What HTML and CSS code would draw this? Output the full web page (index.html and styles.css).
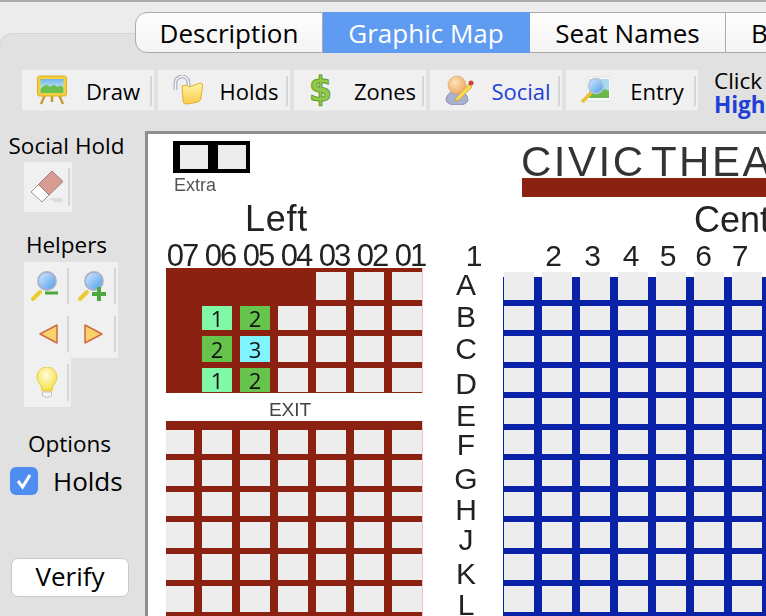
FILE: index.html
```html
<!DOCTYPE html>
<html lang="en">
<head>
    <meta charset="UTF-8">
    <meta name="viewport" content="width=device-width, initial-scale=1.0">
    <title>Graphic Map</title>
    <link rel="stylesheet" href="styles.css">
</head>
<body>
    <!-- Tab strip sits half over the panel -->
    <div class="tabs">
        <div class="tab tab-first">Description</div>
        <div class="tab tab-active">Graphic Map</div>
        <div class="tab tab-seats">Seat Names</div>
        <div class="tab tab-last">B</div>
    </div>

    <div class="panel">
        <div class="toolbar">
            <div class="tool">
                <svg class="tool-icon" viewBox="0 0 30 30">
                    <defs>
                        <linearGradient id="sky" x1="0" y1="0" x2="0" y2="1"><stop offset="0" stop-color="#6fb6ee"/><stop offset="1" stop-color="#f2f8ee"/></linearGradient>
                        <linearGradient id="lens" x1="0" y1="0" x2="1" y2="1"><stop offset="0" stop-color="#d8ecff"/><stop offset="1" stop-color="#4a9bea"/></linearGradient>
                        <linearGradient id="folder" x1="0" y1="0" x2="0" y2="1"><stop offset="0" stop-color="#fff5a8"/><stop offset="1" stop-color="#f8cb48"/></linearGradient>
                        <radialGradient id="head" cx="0.4" cy="0.35" r="0.7"><stop offset="0" stop-color="#fde2b8"/><stop offset="1" stop-color="#eda860"/></radialGradient>
                        <radialGradient id="bulb" cx="0.45" cy="0.35" r="0.7"><stop offset="0" stop-color="#fffde0"/><stop offset="1" stop-color="#f6dc30"/></radialGradient>
                    </defs>
                    <path d="M8 20 L4 29 M22 20 L26 29 M15 20 V27" stroke="#c8982c" stroke-width="2.4" fill="none"/>
                    <rect x="0.5" y="1" width="29" height="20" rx="2" fill="#f5cf3e" stroke="#dcae28"/>
                    <rect x="3.5" y="4" width="23" height="14" fill="url(#sky)"/>
                    <path d="M3.5 18 V14 Q9 7 13 12 Q18 8 20 12 Q24 9 26.500 13 V18 Z" fill="#6cc04e"/>
                </svg>
                <span class="tool-label">Draw</span>
            </div>
            <div class="tool">
                <svg class="tool-icon" viewBox="0 0 30 30">
                    <path d="M2.500 15 V9 A6.500 6.500 0 0 1 15.500 7 V11" stroke="#a8acc0" stroke-width="3.800" fill="none"/>
                    <path d="M2.500 15 V9 A6.500 6.500 0 0 1 15.500 7 V11" stroke="#f4f4f8" stroke-width="1.600" fill="none"/>
                    <path d="M9 11 L14 10 L16 12 L27 8 Q30 8 29.500 11 L28 23 Q27.500 26 25 27 L14 29 Q10 29.500 10 26 Z" fill="url(#folder)" stroke="#e0b038"/>
                </svg>
                <span class="tool-label">Holds</span>
            </div>
            <div class="tool">
                <span class="tool-icon dollar">$</span>
                <span class="tool-label">Zones</span>
            </div>
            <div class="tool">
                <svg class="tool-icon" viewBox="0 0 30 30">
                    <path d="M1 25 Q2 16 12 16 Q22 16 23 25 Q22 30 12 30 Q2 30 1 25 Z" fill="#aab0d2" stroke="#8c90b4"/>
                    <circle cx="12" cy="10" r="9" fill="url(#head)" stroke="#d8a060" stroke-width="0.6"/>
                    <path d="M11 23 L24 9 L27 12 L14 25 L10 26 Z" fill="#f6dc50" stroke="#c8a030" stroke-width="0.8"/>
                    <circle cx="26" cy="8" r="2.500" fill="#c8443c"/>
                </svg>
                <span class="tool-label tool-label-blue">Social</span>
            </div>
            <div class="tool">
                <svg class="tool-icon" viewBox="0 0 30 30">
                    <rect x="6" y="2" width="24" height="24" fill="#fafafa" stroke="#d8d8d8" stroke-width="0.6"/>
                    <rect x="8" y="4" width="20" height="19" fill="#a8d8f2"/>
                    <path d="M8 23 V17 Q16 12 20 15 Q24 13 28 16 V23 Z" fill="#6cb84c"/>
                    <path d="M10 18 L2 26" stroke="#e8c030" stroke-width="3.400" stroke-linecap="round"/>
                    <circle cx="15" cy="11" r="7.500" fill="url(#lens)" stroke="#b8c4d8" stroke-width="1.500"/>
                </svg>
                <span class="tool-label">Entry</span>
            </div>
            <div class="hint">Click<br><b class="hint-blue">High</b></div>
        </div>

        <div class="workarea">
            <div class="sidebar">
                <div class="side-title">Social Hold</div>
                <div class="side-btn side-btn-single">
                    <svg class="icon-eraser" viewBox="0 0 34 34">
                        <path d="M1 22 L8.500 14.500 L19 25 L12 32 Z" fill="#fbfbfb" stroke="#9a9a9a"/>
                        <path d="M8.500 14.500 L22 1 L33 11.500 L19 25 Z" fill="#d89c94" stroke="#a07c78"/>
                        <path d="M20 29 H32 M23 31 H33" stroke="#c8c8c8"/>
                    </svg>
                </div>

                <div class="side-title side-title-helpers">Helpers</div>
                <div class="helper-grid">
                    <div class="side-btn">
                        <svg class="icon-small" viewBox="0 0 30 32">
                            <use href="#glass"/>
                            <path d="M15 23 H28" stroke="#4fa83c" stroke-width="3"/>
                        </svg>
                    </div>
                    <div class="side-btn">
                        <svg class="icon-small" viewBox="0 0 30 32">
                            <g id="glass">
                                <path d="M10 22 L3 29" stroke="#eccb30" stroke-width="4" stroke-linecap="round"/>
                                <circle cx="17" cy="11" r="9" fill="url(#lens)" stroke="#aab0cc" stroke-width="1.800"/>
                            </g>
                            <path d="M15 24 H29 M22 17 V31" stroke="#4fa83c" stroke-width="4"/>
                        </svg>
                    </div>
                    <div class="side-btn">
                        <svg class="icon-small" viewBox="0 0 30 32">
                            <path d="M10 16 L27 7 V25 Z" fill="#f8d468" stroke="#cf6a48" stroke-width="1.500" stroke-linejoin="round"/>
                        </svg>
                    </div>
                    <div class="side-btn">
                        <svg class="icon-small" viewBox="0 0 30 32">
                            <path d="M25 16 L8 7 V25 Z" fill="#f8d468" stroke="#cf6a48" stroke-width="1.500" stroke-linejoin="round"/>
                        </svg>
                    </div>
                    <div class="side-btn">
                        <svg class="icon-small" viewBox="0 0 30 32">
                            <path d="M12 24 Q12 19 9 16 A10 10 0 1 1 25 16 Q22 19 22 24 Z" fill="url(#bulb)" stroke="#e4c428" stroke-width="0.800"/>
                            <path d="M12.500 25 H21.500 V29 Q17 32 12.500 29 Z" fill="#f4f4f4" stroke="#c4c4c4"/>
                        </svg>
                    </div>
                </div>

                <div class="side-title side-title-options">Options</div>
                <label class="check-row">
                    <span class="check-box">
                        <svg viewBox="0 0 28 28" class="check-mark"><path d="M8 14 L12.500 20 L20 8" stroke="#fff" stroke-width="3" fill="none"/></svg>
                    </span>
                    Holds
                </label>
                <div class="verify">Verify</div>
            </div>

            <!-- Seat map: a free canvas, blocks are placed where the venue has them -->
            <div class="map">
                <div class="extra">
                    <div class="extra-seat"></div>
                    <div class="extra-seat"></div>
                </div>
                <div class="extra-label">Extra</div>

                <div class="venue">CIVIC THEA</div>
                <div class="stage"></div>

                <div class="section-name section-left">Left</div>
                <div class="section-name section-center">Cent</div>

                <div class="left-head">
                    <span>07</span><span>06</span><span>05</span><span>04</span><span>03</span><span>02</span><span>01</span>
                </div>

                <div class="block block-left-top">
                    <div class="seat held"></div><div class="seat held"></div><div class="seat held"></div><div class="seat held"></div><div class="seat"></div><div class="seat"></div><div class="seat"></div>
                    <div class="seat held"></div><div class="seat mint">1</div><div class="seat green">2</div><div class="seat"></div><div class="seat"></div><div class="seat"></div><div class="seat"></div>
                    <div class="seat held"></div><div class="seat green">2</div><div class="seat cyan">3</div><div class="seat"></div><div class="seat"></div><div class="seat"></div><div class="seat"></div>
                    <div class="seat held"></div><div class="seat mint">1</div><div class="seat green">2</div><div class="seat"></div><div class="seat"></div><div class="seat"></div><div class="seat"></div>
                </div>

                <div class="exit">EXIT</div>

                <div class="block block-left-bottom">
                    <div class="seat"></div><div class="seat"></div><div class="seat"></div><div class="seat"></div><div class="seat"></div><div class="seat"></div><div class="seat"></div>
                    <div class="seat"></div><div class="seat"></div><div class="seat"></div><div class="seat"></div><div class="seat"></div><div class="seat"></div><div class="seat"></div>
                    <div class="seat"></div><div class="seat"></div><div class="seat"></div><div class="seat"></div><div class="seat"></div><div class="seat"></div><div class="seat"></div>
                    <div class="seat"></div><div class="seat"></div><div class="seat"></div><div class="seat"></div><div class="seat"></div><div class="seat"></div><div class="seat"></div>
                    <div class="seat"></div><div class="seat"></div><div class="seat"></div><div class="seat"></div><div class="seat"></div><div class="seat"></div><div class="seat"></div>
                    <div class="seat"></div><div class="seat"></div><div class="seat"></div><div class="seat"></div><div class="seat"></div><div class="seat"></div><div class="seat"></div>
                </div>

                <div class="center-head">
                    <span>1</span><i></i><span>2</span><span>3</span><span>4</span><span>5</span><span>6</span><span>7</span>
                </div>

                <div class="rows">
                    <span>A</span><span>B</span><span>C</span><span>D</span><span>E</span><span>F</span><span>G</span><span>H</span><span>J</span><span>K</span><span>L</span>
                </div>

                <div class="block block-center">
                    <div class="seat"></div><div class="seat"></div><div class="seat"></div><div class="seat"></div><div class="seat"></div><div class="seat"></div><div class="seat"></div>
                    <div class="seat"></div><div class="seat"></div><div class="seat"></div><div class="seat"></div><div class="seat"></div><div class="seat"></div><div class="seat"></div>
                    <div class="seat"></div><div class="seat"></div><div class="seat"></div><div class="seat"></div><div class="seat"></div><div class="seat"></div><div class="seat"></div>
                    <div class="seat"></div><div class="seat"></div><div class="seat"></div><div class="seat"></div><div class="seat"></div><div class="seat"></div><div class="seat"></div>
                    <div class="seat"></div><div class="seat"></div><div class="seat"></div><div class="seat"></div><div class="seat"></div><div class="seat"></div><div class="seat"></div>
                    <div class="seat"></div><div class="seat"></div><div class="seat"></div><div class="seat"></div><div class="seat"></div><div class="seat"></div><div class="seat"></div>
                    <div class="seat"></div><div class="seat"></div><div class="seat"></div><div class="seat"></div><div class="seat"></div><div class="seat"></div><div class="seat"></div>
                    <div class="seat"></div><div class="seat"></div><div class="seat"></div><div class="seat"></div><div class="seat"></div><div class="seat"></div><div class="seat"></div>
                    <div class="seat"></div><div class="seat"></div><div class="seat"></div><div class="seat"></div><div class="seat"></div><div class="seat"></div><div class="seat"></div>
                    <div class="seat"></div><div class="seat"></div><div class="seat"></div><div class="seat"></div><div class="seat"></div><div class="seat"></div><div class="seat"></div>
                    <div class="seat"></div><div class="seat"></div><div class="seat"></div><div class="seat"></div><div class="seat"></div><div class="seat"></div><div class="seat"></div>
                </div>
            </div>
        </div>
    </div>
</body>
</html>
```

FILE: styles.css
```css
html, body {
    height: 100%;
}

body {
    margin: 0;
    background: #ececec;
    border-top: 2px solid #ababab;
    box-sizing: border-box;
    font-family: 'Open Sans', sans-serif;
    color: #000;
    overflow: hidden;
    display: flex;
    flex-direction: column;
}

/* Tabs */
.tabs {
    display: flex;
    flex-shrink: 0;
    height: 41px;
    margin: 10px 0 -20px 135px;
    position: relative;
    z-index: 1;
    font-size: 26px;
}

.tab {
    display: flex;
    flex-shrink: 0;
    align-items: center;
    justify-content: center;
    box-sizing: border-box;
    background: linear-gradient(#fdfdfd, #f4f4f4);
    border: 1px solid #ababab;
    border-left: none;
}

.tab-first {
    width: 188px;
    border-left: 1px solid #ababab;
    border-radius: 12px 0 0 12px;
}

.tab-active {
    width: 207px;
    background: #5f9bf0;
    border-color: #5f9bf0;
    color: #fff;
}

.tab-seats {
    width: 196px;
}

.tab-last {
    width: 60px;
    justify-content: flex-start;
    padding-left: 25px;
    border-right: none;
}

/* Main panel */
.panel {
    flex: 1;
    display: flex;
    flex-direction: column;
    min-height: 0;
    padding-top: 37px;
    background: #e1e1e1;
    border-top: 1px solid #d4d4d4;
    border-left: 1px solid #d4d4d4;
    margin-left: -1px;
    border-top-left-radius: 14px;
}

.toolbar {
    display: flex;
    flex-shrink: 0;
    gap: 4px;
    height: 40px;
    margin-top: -1px;
    padding-left: 22px;
    font-size: 22px;
    white-space: nowrap;
}

.tool {
    position: relative;
    display: flex;
    align-items: center;
    width: 132px;
    padding-left: 15px;
    box-sizing: border-box;
    background: #f0f0f0;
    box-shadow: 0 1px 0 #e8e8e8;
}

.tool::after {
    content: "";
    position: absolute;
    left: 128px;
    top: 6px;
    width: 2px;
    height: 30px;
    background: #d6d6d6;
}

.tool-icon {
    width: 30px;
    height: 30px;
    flex-shrink: 0;
}

.tool-label {
    width: 82px;
    margin: 2px 0 0 5px;
    text-align: center;
}

.tool-label-blue {
    color: #1f3fd6;
}

.dollar {
    font-family: 'DejaVu Sans', sans-serif;
    font-size: 33px;
    font-weight: bold;
    line-height: 30px;
    color: #93c94a;
    -webkit-text-stroke: 1px #5e9e2c;
}

.hint {
    margin-left: 12px;
    line-height: 24px;
    margin-top: -1px;
    font-size: 22.5px;
}

.hint-blue {
    color: #1f3fd6;
}

.workarea {
    flex: 1;
    display: flex;
    min-height: 0;
    margin-top: 21px;
}

/* Left column */
.sidebar {
    width: 145px;
    flex-shrink: 0;
    display: flex;
    flex-direction: column;
    font-size: 22.5px;
}

.side-title {
    width: 133px;
    height: 30px;
    line-height: 30px;
    text-align: center;
    white-space: nowrap;
}

.side-title-helpers {
    margin-top: 18px;
}

.side-title-options {
    margin-top: 22px;
    margin-left: 3px;
}

.side-btn {
    position: relative;
    display: flex;
    align-items: center;
    padding-left: 6px;
    box-sizing: border-box;
    background: #f0f0f0;
}

.side-btn::after {
    content: "";
    position: absolute;
    right: 2px;
    top: 6px;
    bottom: 6px;
    width: 2px;
    background: #d6d6d6;
}

.side-btn-single {
    width: 48px;
    height: 50px;
    margin: 1px 0 0 24px;
}

.icon-eraser {
    width: 34px;
    height: 34px;
}

.icon-small {
    width: 30px;
    height: 32px;
}

.helper-grid {
    display: grid;
    grid-template-columns: 47px 47px;
    grid-template-rows: 48px 48px 49px;
    width: 94px;
    margin: 2px 0 0 24px;
}

.check-row {
    display: flex;
    align-items: center;
    gap: 15px;
    height: 28px;
    margin: 8px 0 0 10px;
    font-size: 26px;
}

.check-box {
    display: block;
    width: 28px;
    height: 28px;
    border-radius: 6px;
    background: #4f8df1;
}

.check-mark {
    display: block;
}

.verify {
    width: 118px;
    height: 39px;
    line-height: 35px;
    margin: auto 0 19px 11px;
    box-sizing: border-box;
    text-align: center;
    font-size: 26px;
    background: #fff;
    border: 1px solid #c8c8c8;
    border-radius: 7px;
}

/* Seat map */
.map {
    flex: 1;
    position: relative;
    overflow: hidden;
    background: #fff;
    border-top: 3px solid #8f8f8f;
    border-left: 3px solid #8f8f8f;
    font-family: 'Liberation Sans', sans-serif;
    color: #222;
    filter: blur(0.3px);
}

.extra {
    position: absolute;
    left: 25px;
    top: 7px;
    display: flex;
    gap: 10px;
    width: 77px;
    height: 32px;
    box-sizing: border-box;
    padding: 4px 4px 4px 7px;
    background: #000;
}

.extra-seat {
    flex: 1;
    background: #ececec;
}

.extra-label {
    position: absolute;
    left: 26px;
    top: 41px;
    font-size: 18px;
    color: #555;
}

.venue {
    position: absolute;
    left: 373px;
    top: 4px;
    font-size: 42px;
    line-height: 48px;
    letter-spacing: 2.5px;
    word-spacing: -8px;
    white-space: nowrap;
    color: #333;
}

.stage {
    position: absolute;
    left: 374px;
    top: 44px;
    right: 0;
    height: 19px;
    background: #8b2211;
}

.section-name {
    position: absolute;
    font-size: 36px;
    line-height: 40px;
}

.section-left {
    left: 97px;
    top: 65px;
    letter-spacing: 0.7px;
}

.section-center {
    left: 546px;
    top: 66px;
}

.left-head {
    position: absolute;
    left: 15px;
    top: 107px;
    display: flex;
    font-size: 31px;
    line-height: 30px;
    letter-spacing: -2px;
}

.left-head span {
    width: 38px;
    text-align: center;
}

.center-head {
    position: absolute;
    left: 307px;
    top: 107px;
    display: grid;
    grid-template-columns: 38px 41px 39px 39px 38px 36px 35px 38px;
    font-size: 30px;
    line-height: 30px;
}

.center-head span {
    text-align: center;
}

.rows {
    position: absolute;
    left: 298px;
    top: 135px;
    width: 40px;
    display: grid;
    grid-template-rows: 32px 32px 32px 38px 26px 32px 36px 26px 34px 34px 28px;
    font-size: 30px;
    line-height: 24px;
    text-align: center;
}

.rows span {
    align-self: center;
}

.block {
    position: absolute;
    display: grid;
    gap: 6px 8px;
}

.block-left-top,
.block-left-bottom {
    left: 18px;
    width: 257px;
    box-sizing: border-box;
    grid-template-columns: 28px repeat(6, 30px);
    background: #8b2211;
    border-right: 1px solid #eec4c4;
}

.block-left-top {
    top: 134px;
    height: 125px;
    padding-top: 4px;
    grid-template-rows: 28px 24px 26px 24px;
}

.block-left-bottom {
    top: 287px;
    height: 195px;
    padding-top: 9px;
    grid-template-rows: 24px 26px 24px 26px 26px 26px;
}

.block-center {
    left: 355px;
    top: 138px;
    height: 344px;
    width: 263px;
    box-sizing: border-box;
    padding-left: 1px;
    grid-template-columns: repeat(7, 30px);
    grid-template-rows: 28px 24px 26px 24px 26px 24px 26px 24px 26px 26px 26px;
    background: linear-gradient(#fff 5px, #0a22a8 5px);
}

.seat {
    display: flex;
    align-items: center;
    justify-content: center;
    background: #ededed;
    font-family: 'Open Sans', sans-serif;
    font-size: 22px;
    color: #111;
}

.seat.held {
    background: #8b2211;
}

.seat.mint {
    background: #80f8a8;
}

.seat.green {
    background: #66c44c;
}

.seat.cyan {
    background: #80f4ff;
}

.exit {
    position: absolute;
    left: 18px;
    top: 265px;
    width: 248px;
    text-align: center;
    font-size: 19px;
    line-height: 22px;
    color: #444;
}
```
